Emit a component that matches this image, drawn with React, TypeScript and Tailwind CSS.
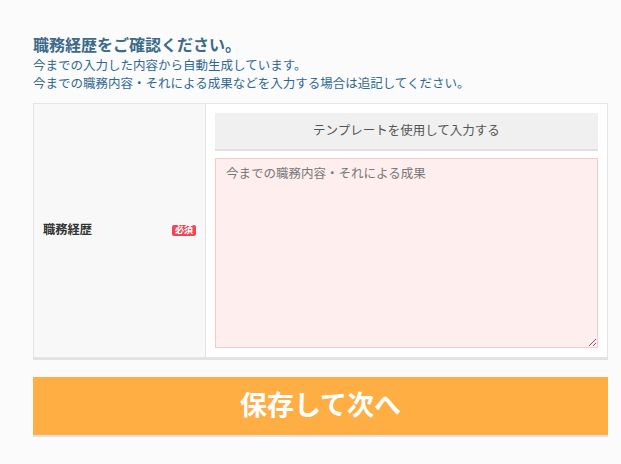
import React from "react";

const font = {
  fontFamily: '"Liberation Sans", "Noto Sans CJK JP", sans-serif',
};

export default function App() {
  return (
    <div className="min-h-[464px] w-full bg-[#fbfbfb]" style={font}>
      <div className="w-[621px] pl-[33px] pr-[13px] pt-[36px] pb-[28px]">
        {/* Heading */}
        <h2 className="text-[16px] font-bold leading-[20px] text-[#3b6a8c]">
          職務経歴をご確認ください。
        </h2>
        <p className="mt-[1px] text-[12.5px] leading-[18px] text-[#2f6893]">
          今までの入力した内容から自動生成しています。
          <br />
          今までの職務内容・それによる成果などを入力する場合は追記してください。
        </p>

        {/* Form table */}
        <div className="mt-[10px] flex border border-[#e4e4e4] bg-white shadow-[0_2px_0_#e2e2e2]">
          <div className="flex w-[172px] shrink-0 items-center justify-between border-r border-[#e4e4e4] bg-[#f8f8f8] px-[9px]">
            <span className="text-[12.25px] font-bold text-[#333]">職務経歴</span>
            <span className="rounded-[2px] bg-[#f04655] px-[3px] text-[9px] leading-[11px] font-bold text-white">
              必須
            </span>
          </div>
          <div className="flex flex-1 flex-col gap-[9px] p-[9px]">
            <button className="h-[36px] w-full bg-[#f0f0f0] text-[12.5px] text-[#555] shadow-[0_2px_0_#e0e0e0]">
              テンプレートを使用して入力する
            </button>
            <textarea
              className="h-[190px] w-full border border-[#fcc9c9] bg-[#ffeeee] px-[10px] py-[5px] text-[12.5px] leading-[20px] text-[#333] placeholder:text-[#777] outline-none"
              placeholder="今までの職務内容・それによる成果"
            />
          </div>
        </div>

        {/* Submit */}
        <button className="mt-[19px] flex h-[58px] w-full items-center justify-center bg-[#ffae43] text-[27px] font-bold text-white shadow-[0_2px_0_#e0e0e0]">
          保存して次へ
        </button>
      </div>
    </div>
  );
}
